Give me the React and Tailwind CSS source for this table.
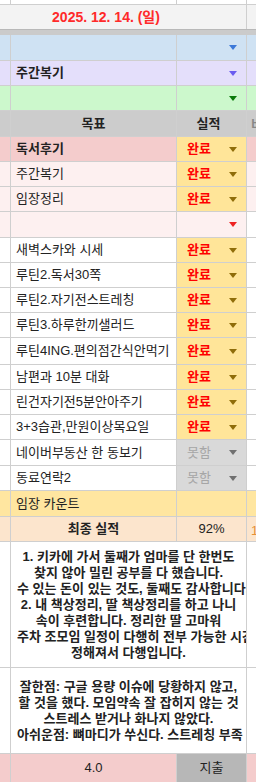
const line = 'border-[#cfcfcf]'

function Arrow({ color }) {
  return (
    <span
      className={`ml-auto h-0 w-0 border-x-[4px] border-t-[5px] border-x-transparent ${color}`}
    />
  )
}

function Row({ h, bg, leftBg, rightBg, children, status, statusBg }) {
  return (
    <div className={`flex ${h} border-b ${line}`}>
      <div className={`w-[11px] shrink-0 border-r ${line} ${leftBg || bg}`} />
      <div className={`flex w-[166px] shrink-0 items-center overflow-hidden border-r px-[5px] ${line} ${bg}`}>
        {children}
      </div>
      <div
        className={`flex w-[70px] shrink-0 items-center border-r pl-[10px] pr-[9px] ${line} ${statusBg || bg}`}
      >
        {status}
      </div>
      <div className={`flex-1 ${rightBg || bg}`} />
    </div>
  )
}

const done = (
  <>
    <span className="font-bold text-[#ff0000]">완료</span>
    <Arrow color="border-t-[#8f6d0a]" />
  </>
)

const missed = (
  <>
    <span className="text-[#a6a6a6]">못함</span>
    <Arrow color="border-t-[#707070]" />
  </>
)

const tasks = [
  ['새벽스카와 시세', 'h-[25px]', done],
  ['루틴2.독서30쪽', 'h-[25px]', done],
  ['루틴2.자기전스트레칭', 'h-[25px]', done],
  ['루틴3.하루한끼샐러드', 'h-[25px]', done],
  ['루틴4ING.편의점간식안먹기', 'h-[27px]', done],
  ['남편과 10분 대화', 'h-[25px]', done],
  ['린건자기전5분안아주기', 'h-[25px]', done],
  ['3+3습관,만원이상목요일', 'h-[25px]', done],
  ['네이버부동산 한 동보기', 'h-[26px]', missed],
  ['동료연락2', 'h-[25px]', missed],
]

const review1 = [
  '1. 키카에 가서 둘째가 엄마를 단 한번도',
  '찾지 않아 밀린 공부를 다 했습니다.',
  '수 있는 돈이 있는 것도, 둘째도 감사합니다.',
  '2. 내 책상정리, 딸 책상정리를 하고 나니',
  '속이 후련합니다. 정리한 딸 고마워',
  '주차 조모임 일정이 다행히 전부 가능한 시간으로',
  '정해져서 다행입니다.',
]

const review2 = [
  '잘한점: 구글 용량 이슈에 당황하지 않고,',
  '할 것을 했다. 모임약속 잘 잡히지 않는 것',
  '스트레스 받거나 화나지 않았다.',
  '아쉬운점: 뼈마디가 쑤신다. 스트레칭 부족',
]

function Review({ h, lines }) {
  return (
    <div className={`flex ${h} border-b ${line}`}>
      <div className={`w-[11px] shrink-0 border-r bg-white ${line}`} />
      <div
        className={`flex w-[236px] shrink-0 flex-col justify-center overflow-hidden border-r bg-white px-[6px] text-center font-bold leading-[16px] text-[#222] ${line}`}
      >
        {lines.map((t) => (
          <div key={t} className="whitespace-nowrap">
            {t}
          </div>
        ))}
      </div>
      <div className="flex-1 bg-white" />
    </div>
  )
}

export default function App() {
  return (
    <div className="h-[782px] w-[256px] overflow-hidden bg-white font-['Liberation_Sans','Noto_Sans_CJK_KR',sans-serif] text-[13px] text-[#222]">
      {/* top strip */}
      <div className={`flex h-[5px] border-b ${line}`}>
        <div className={`w-[11px] border-r ${line}`} />
        <div className={`w-[166px] border-r ${line}`} />
        <div className={`w-[70px] border-r ${line}`} />
      </div>

      {/* date */}
      <div className="flex h-[24px] bg-[#f3f3f3]">
        <div className={`flex w-[247px] items-center justify-center border-r pr-[34px] text-[14px] font-bold text-[#ff2a2a] ${line}`}>
          2025. 12. 14. (일)
        </div>
      </div>
      <div className="h-[6px] border-t border-[#b8b8b8] bg-[#cbcbcb]" />

      <Row h="h-[26px]" bg="bg-[#cfe2f3]" status={<Arrow color="border-t-[#3c78d8]" />} />
      <Row h="h-[25px]" bg="bg-[#e4dffb]" status={<Arrow color="border-t-[#6a5cf0]" />}>
        <span className="font-bold">주간복기</span>
      </Row>
      <Row h="h-[25px]" bg="bg-[#ccf8cc]" status={<Arrow color="border-t-[#0b7a0b]" />} />

      {/* header */}
      <div className={`flex h-[26px] border-b bg-[#cccccc] font-bold ${line}`}>
        <div className={`w-[11px] shrink-0 border-r ${line}`} />
        <div className={`flex w-[166px] shrink-0 items-center justify-center border-r ${line}`}>목표</div>
        <div className={`flex w-[70px] shrink-0 items-center justify-center border-r pr-[6px] ${line}`}>실적</div>
        <div className="flex-1 overflow-hidden whitespace-nowrap pl-[4px] pt-[4px] text-[#888]">비고</div>
      </div>

      <Row h="h-[25px]" bg="bg-[#f4cccc]" status={done} statusBg="bg-[#ffe599]">
        <span className="font-bold">독서후기</span>
      </Row>
      <Row h="h-[25px]" bg="bg-[#fdf0f0]" status={done} statusBg="bg-[#ffe599]">
        주간복기
      </Row>
      <Row h="h-[25px]" bg="bg-[#fdf0f0]" status={done} statusBg="bg-[#ffe599]">
        임장정리
      </Row>
      <Row h="h-[26px]" bg="bg-[#fdf0f0]" rightBg="bg-white" status={<Arrow color="border-t-[#ee2222]" />} />

      {tasks.map(([t, h, s]) => (
        <Row
          key={t}
          h={h}
          bg="bg-white"
          status={s}
          statusBg={s === done ? 'bg-[#ffe599]' : 'bg-[#d9d9d9]'}
        >
          <span className="whitespace-nowrap">{t}</span>
        </Row>
      ))}

      <Row h="h-[26px]" bg="bg-[#ffe6a0]">
        임장 카운트
      </Row>

      {/* final score */}
      <div className={`flex h-[25px] border-b bg-[#fce5cd] ${line}`}>
        <div className={`w-[11px] shrink-0 border-r ${line}`} />
        <div className={`flex w-[166px] shrink-0 items-center justify-center border-r font-bold ${line}`}>
          최종 실적
        </div>
        <div className={`flex w-[70px] shrink-0 items-center justify-center border-r ${line}`}>92%</div>
        <div className="flex-1 overflow-hidden whitespace-nowrap pl-[4px] pt-[4px] text-[#e69138]">1</div>
      </div>

      <Review h="h-[126px]" lines={review1} />
      <Review h="h-[86px]" lines={review2} />

      {/* bottom */}
      <div className={`flex h-[29px] border-b bg-[#f4cccc] ${line}`}>
        <div className={`w-[11px] shrink-0 border-r ${line}`} />
        <div className={`flex w-[166px] shrink-0 items-center justify-center border-r ${line}`}>4.0</div>
        <div className={`flex w-[70px] shrink-0 items-center justify-center border-r bg-[#b7b7b7] ${line}`}>
          지출
        </div>
        <div className="flex-1" />
      </div>
    </div>
  )
}
